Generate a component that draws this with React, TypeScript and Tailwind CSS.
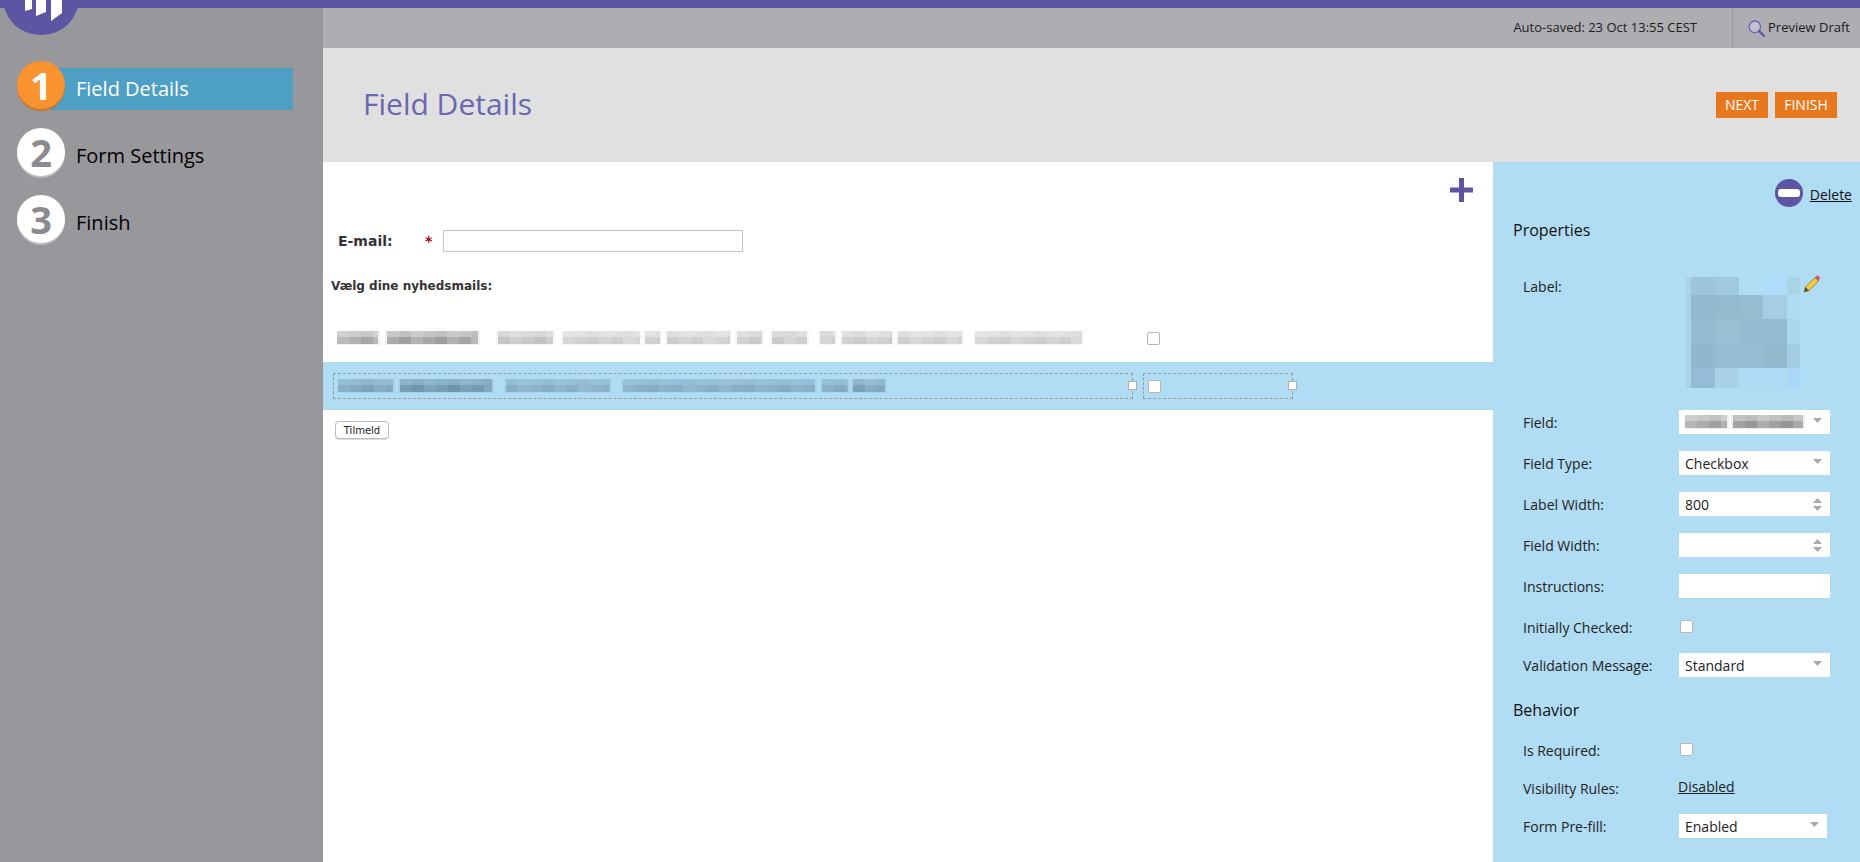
const redactWords: [number, number, number][] = [
  [0, 41, 0.55], [50, 141, 0.6], [161, 216, 0.36], [226, 303, 0.3], [308, 323, 0.3], [330, 393, 0.3],
  [400, 425, 0.34], [435, 470, 0.34], [483, 498, 0.34], [505, 555, 0.32], [561, 625, 0.3], [638, 745, 0.3],
]
const selectedWords: [number, number, number][] = [
  [0, 55, 0.46], [62, 154, 0.58], [168, 272, 0.36], [285, 477, 0.38], [484, 510, 0.38], [515, 547, 0.46],
]

// deterministic cell shading so the pixelation looks uneven
function shade(i: number) {
  return 0.72 + ((i * 37) % 11) / 30
}

function Redacted({ words, width, color }: { words: [number, number, number][]; width: number; color: string }) {
  const cells: { x: number; y: number; w: number; h: number; o: number }[] = []
  words.forEach(([a, b, o], k) => {
    cells.push({ x: a - 2, y: 0, w: b - a + 4, h: 14, o: o * 0.18 })
    for (let x = a, i = k; x < b; x += 12, i++) {
      const w = Math.min(12, b - x)
      cells.push({ x, y: 0, w, h: 6, o: o * 0.6 * shade(i) })
      cells.push({ x, y: 6, w, h: 7, o: o * shade(i + 3) })
    }
  })
  return (
    <svg width={width} height={14} viewBox={`0 0 ${width} 14`} className="block blur-[0.6px]">
      {cells.map((c, i) => (
        <rect key={i} x={c.x} y={c.y} width={c.w} height={c.h} fill={color} opacity={c.o} />
      ))}
    </svg>
  )
}

const mosaic = [
  ['#a9d3ea', '#9cc5dc', '#a0c8df', '#b0dcf4', '#aedcfa', '#a9d5e6'],
  ['#a9d3ea', '#91b8cf', '#94bad0', '#97bdd3', '#a5cde3', '#b0dcf2'],
  ['#a9d3ea', '#94bbd2', '#98c0d5', '#94bbd1', '#93bad0', '#a9d5ed'],
  ['#a9d3ea', '#91b7ce', '#95bcd2', '#95bcd2', '#93b9cf', '#a4cce3'],
  ['#a9d3ea', '#94bcd6', '#a9d2ea', '#b0dbf5', '#b0dbf5', '#abd8f8'],
]

function LabelMosaic() {
  const xs = [0, 5, 29, 53, 77, 101]
  const ws = [5, 24, 24, 24, 24, 13]
  const ys = [0, 18, 42, 67, 91]
  const hs = [18, 24, 25, 24, 20]
  return (
    <svg width={114} height={111} viewBox="0 0 114 111" className="block">
      {mosaic.map((row, r) =>
        row.map((c, i) => <rect key={`${r}-${i}`} x={xs[i]} y={ys[r]} width={ws[i]} height={hs[r]} fill={c} />),
      )}
    </svg>
  )
}

function Step({ n, label, active }: { n: number; label: string; active?: boolean }) {
  return (
    <div className={active ? 'ml-[50px] flex h-[42px] w-[243px] items-center bg-[#4d9fc3]' : 'ml-[50px] flex h-[42px] w-[243px] items-center'}>
      <div
        className={
          active
            ? '-mt-[8px] -ml-[33px] flex h-[48px] w-[48px] shrink-0 items-center justify-center rounded-full bg-[#f8932f] text-[38px] leading-none font-bold text-white shadow-[0_2px_0_#c9762a]'
            : '-mt-[8px] -ml-[33px] flex h-[48px] w-[48px] shrink-0 items-center justify-center rounded-full bg-white text-[38px] leading-none font-bold text-[#8b8a8e] shadow-[0_2px_0_#bdbcc0]'
        }
      >
        {n}
      </div>
      <span className={active ? 'ml-[11px] -mt-[1px] text-[20px] font-medium text-white' : 'ml-[11px] -mt-[1px] text-[20px] text-black'}>{label}</span>
    </div>
  )
}

function Row({ label, children, h = 'h-[24px]', mb = 'mb-[17px]' }: { label: string; children?: React.ReactNode; h?: string; mb?: string }) {
  return (
    <div className={`flex items-center pl-[30px] ${h} ${mb}`}>
      <span className="w-[156px] shrink-0 text-[14px] text-[#222]">{label}</span>
      {children}
    </div>
  )
}

function SelectBox({ value, w = 'w-[151px]', children }: { value?: string; w?: string; children?: React.ReactNode }) {
  return (
    <div className={`flex h-[24px] items-center justify-between bg-white pl-[6px] pr-[8px] text-[14px] text-[#222] ${w}`}>
      {children ?? <span>{value}</span>}
      <svg width="9" height="5" viewBox="0 0 9 5" className="-mt-[3px] shrink-0">
        <path d="M0 0h9L4.500 5z" fill="#a9a9a9" />
      </svg>
    </div>
  )
}

function NumberBox({ value }: { value?: string }) {
  return (
    <div className="flex h-[24px] w-[151px] items-center justify-between bg-white pl-[6px] pr-[8px] text-[14px] text-[#222]">
      <span>{value}</span>
      <svg width="9" height="13" viewBox="0 0 9 13" className="shrink-0">
        <path d="M4.500 0L9 5H0zM0 8h9l-4.500 5z" fill="#a9a9a9" />
      </svg>
    </div>
  )
}

function Check({ className = '' }: { className?: string }) {
  return <div className={`h-[13px] w-[13px] rounded-[2px] border border-[#b5b5b5] bg-white ${className}`} />
}

export default function App() {
  return (
    <div className="flex h-[862px] w-[1860px] flex-col overflow-hidden font-['Open_Sans',sans-serif]">
      <div className="h-[8px] shrink-0 bg-[#5e54a4]" />
      <div className="flex min-h-0 flex-1">
        <aside className="relative w-[323px] shrink-0 bg-[#98979c]">
          <svg width="76" height="36" viewBox="0 0 76 36" className="absolute top-[-8px] left-[3px]">
            <path d="M0 0h76C74 21 58 35 38 35S2 21 0 0z" fill="#5e54a4" />
            <path d="M22 0h7v9l-7 2zM33 0h10v12l-10 4zM48 0h11v13l-11 8z" fill="#fff" />
          </svg>
          <div className="flex flex-col gap-[25px] pt-[60px]">
            <Step n={1} label="Field Details" active />
            <Step n={2} label="Form Settings" />
            <Step n={3} label="Finish" />
          </div>
        </aside>

        <div className="flex min-w-0 flex-1 flex-col">
          <div className="flex h-[40px] shrink-0 items-center justify-end bg-[#aeadb2] text-[13px] text-[#1c1c1c]">
            <span className="mr-[35px]">Auto-saved: 23 Oct 13:55 CEST</span>
            <div className="flex h-full w-[128px] items-center border-l border-[#9c9ba0] pl-[15px]">
              <svg width="17" height="17" viewBox="0 0 17 17" fill="none" className="mr-[3px] shrink-0">
                <circle cx="6.800" cy="6.800" r="5.800" stroke="#6b62ac" strokeWidth="1.300" fill="#c3c0d4" />
                <path d="M11 11l5 5" stroke="#5e54a4" strokeWidth="2.200" strokeLinecap="round" />
              </svg>
              <span>Preview Draft</span>
            </div>
          </div>

          <div className="flex h-[114px] shrink-0 items-center justify-between bg-[#e0e0e0] pr-[23px] pl-[40px]">
            <h1 className="-mt-[4px] text-[30px] font-normal text-[#6b66b0]">Field Details</h1>
            <div className="-mt-[1px] flex gap-[7px]">
              <button className="h-[26px] w-[52px] bg-[#e8781e] text-[14px] font-medium text-white">NEXT</button>
              <button className="h-[26px] w-[62px] bg-[#e8781e] text-[14px] font-medium text-white">FINISH</button>
            </div>
          </div>

          <div className="flex min-h-0 flex-1">
            <main className="min-w-0 flex-1 bg-white">
              <div className="flex justify-end pt-[16px] pr-[20px]">
                <svg width="23" height="24" viewBox="0 0 23 24">
                  <path d="M9 0h5v9.500h9v5h-9V24H9v-9.500H0v-5h9z" fill="#5e54a4" />
                </svg>
              </div>
              <div className="mt-[28px] flex h-[22px] items-center pl-[15px] font-['DejaVu_Sans',sans-serif] text-[14px] font-bold text-[#333]">
                <span className="w-[87px]">E-mail:</span>
                <span className="w-[18px] font-bold text-[#b00000]">*</span>
                <div className="h-[22px] w-[300px] border border-[#c4c4c4] bg-white" />
              </div>
              <p className="mt-[27px] pl-[8px] font-['DejaVu_Sans',sans-serif] text-[12px] leading-[14px] font-bold text-[#333]">Vælg dine nyhedsmails:</p>
              <div className="mt-[35px] flex h-[20px] items-center pl-[14px]">
                <Redacted words={redactWords} width={752} color="#6e6e6e" />
                <Check className="ml-[58px]" />
              </div>
              <div className="mt-[14px] flex h-[48px] items-center bg-[#b0dcf4] pl-[10px]">
                <div className="relative flex h-[26px] w-[800px] items-center border border-dashed border-[#9a9a9a] pl-[4px]">
                  <Redacted words={selectedWords} width={668} color="#4f6f85" />
                  <div className="absolute top-[7px] -right-[5px] h-[9px] w-[9px] border border-[#b0b0b0] bg-white" />
                </div>
                <div className="relative ml-[10px] flex h-[26px] w-[150px] items-center border border-dashed border-[#9a9a9a] pl-[4px]">
                  <Check />
                  <div className="absolute top-[7px] -right-[5px] h-[9px] w-[9px] border border-[#b0b0b0] bg-white" />
                </div>
              </div>
              <div className="mt-[11px] pl-[12px]">
                <button className="flex h-[18px] w-[54px] items-center justify-center rounded-[4px] border border-[#bbb] bg-white font-['DejaVu_Sans',sans-serif] text-[10px] text-[#222] shadow-[0_1px_0_#ddd]">
                  Tilmeld
                </button>
              </div>
            </main>

            <section className="w-[367px] shrink-0 bg-[#b0dcf4] text-[#111]">
              <div className="mt-[17px] flex h-[28px] items-center justify-end gap-[7px] pr-[8px]">
                <div className="flex h-[28px] w-[28px] items-center justify-center rounded-full bg-[#5e54a4]">
                  <div className="h-[8px] w-[22px] rounded-[3px] bg-white" />
                </div>
                <a className="mt-[2px] text-[14px] underline">Delete</a>
              </div>
              <h2 className="mt-[11px] pl-[20px] text-[16px] leading-[24px]">Properties</h2>
              <div className="mt-[35px] flex h-[133px] pl-[30px]">
                <span className="-mt-[1px] w-[163px] shrink-0 text-[14px] text-[#222]">Label:</span>
                <div className="relative">
                  <LabelMosaic />
                  <svg width="18" height="18" viewBox="0 0 18 18" className="absolute -top-[2px] left-[117px]">
                    <path d="M1 17l1.500-5L12 2.500l3.500 3.500L6 15.500z" fill="#f0c93c" stroke="#7a6a2a" strokeWidth="0.700" />
                    <path d="M1 17l1.500-5 3.500 3.500z" fill="#5a5030" />
                    <path d="M12 2.500l1.500-1.500a1.400 1.400 0 012 0l1 1a1.400 1.400 0 010 2L15.500 6z" fill="#d9534f" />
                  </svg>
                </div>
              </div>
              <Row label="Field:">
                <SelectBox>
                  <Redacted words={[[0, 42, 0.5], [48, 118, 0.55]]} width={120} color="#555" />
                </SelectBox>
              </Row>
              <Row label="Field Type:"><SelectBox value="Checkbox" /></Row>
              <Row label="Label Width:"><NumberBox value="800" /></Row>
              <Row label="Field Width:"><NumberBox /></Row>
              <Row label="Instructions:"><div className="h-[24px] w-[151px] bg-white" /></Row>
              <Row label="Initially Checked:" mb="mb-[14px]"><Check className="-mt-[2px] ml-[1px]" /></Row>
              <Row label="Validation Message:" mb="mb-[21px]"><SelectBox value="Standard" /></Row>
              <h2 className="pl-[20px] text-[16px] leading-[24px]">Behavior</h2>
              <div className="mt-[16px]" />
              <Row label="Is Required:" mb="mb-[14px]"><Check className="-mt-[2px] ml-[1px]" /></Row>
              <Row label="Visibility Rules:" mb="mb-[14px]">
                <a className="-mt-[4px] -ml-[1px] text-[14px] text-[#222] underline">Disabled</a>
              </Row>
              <Row label="Form Pre-fill:"><SelectBox value="Enabled" w="w-[148px]" /></Row>
            </section>
          </div>
        </div>
      </div>
    </div>
  )
}
